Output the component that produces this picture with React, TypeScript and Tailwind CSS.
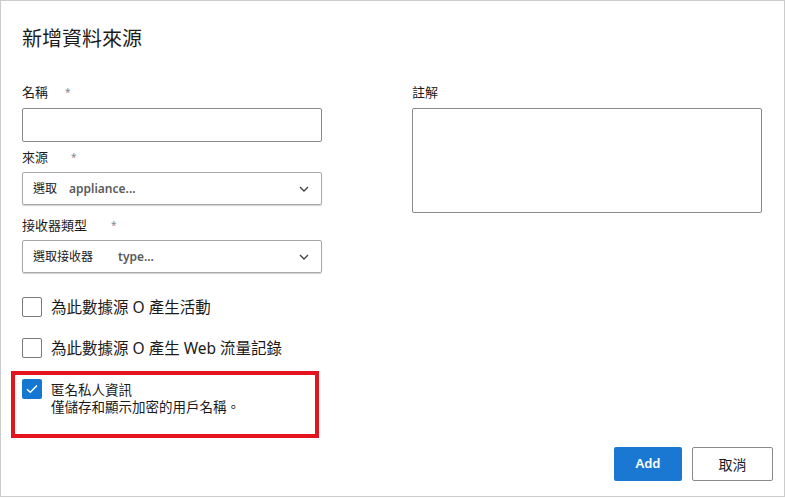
import React from "react";

const font = { fontFamily: '"Noto Sans", "Noto Sans CJK TC", sans-serif' };

function Chevron() {
  return (
    <svg width="10" height="6" viewBox="0 0 10 6" className="shrink-0">
      <path d="M1 1 L5 5 L9 1" fill="none" stroke="#444" strokeWidth="1.4" />
    </svg>
  );
}

function Label({ text, starGap }: { text: string; starGap: string }) {
  return (
    <div className="flex items-center h-[18px] text-[13px] text-[#1b1b1b] leading-[18px]">
      <span>{text}</span>
      <span className={`${starGap} text-[10px] text-[#888]`}>*</span>
    </div>
  );
}

function Select({ a, b, gap }: { a: string; b: string; gap: string }) {
  return (
    <div className="h-[33px] w-[300px] border border-[#a8a8a8] rounded-[2px] shadow-[0_1px_1px_rgba(0,0,0,0.18)] flex items-center pl-[10px] pr-[12px]">
      <span className="text-[12px] text-[#1b1b1b]">{a}</span>
      <span className={`${gap} text-[12px] font-semibold text-[#5a5a5a]`}>{b}</span>
      <div className="flex-1" />
      <Chevron />
    </div>
  );
}

function Box({ checked }: { checked?: boolean }) {
  if (checked)
    return (
      <div className="w-[20px] h-[20px] rounded-[2px] bg-[#1677d2] flex items-center justify-center shrink-0">
        <svg width="12" height="10" viewBox="0 0 12 10">
          <path d="M1 5.2 L4.3 8.3 L11 1.5" fill="none" stroke="white" strokeWidth="1.5" />
        </svg>
      </div>
    );
  return <div className="w-[20px] h-[20px] rounded-[2px] border border-[#7a7a7a] bg-white shrink-0" />;
}

export default function App() {
  return (
    <div
      style={font}
      className="relative w-[785px] h-[497px] border border-[#cccccc] bg-white flex flex-col text-[#1b1b1b]"
    >
      <div className="pl-[21px] pt-[24px] text-[20px] leading-[28px]">新增資料來源</div>
      <div className="flex pl-[21px] mt-[30px] gap-[90px]">
        <div className="w-[300px] flex flex-col">
          <Label text="名稱" starGap="ml-[17px]" />
          <div className="mt-[7px] h-[34px] w-[300px] border border-[#8a8a8a] rounded-[2px]" />
          <div className="mt-[6px]">
            <Label text="來源" starGap="ml-[23px]" />
          </div>
          <div className="mt-[6px]">
            <Select a="選取" b="appliance..." gap="ml-[12px]" />
          </div>
          <div className="mt-[11px]">
            <Label text="接收器類型" starGap="ml-[24px]" />
          </div>
          <div className="mt-[6px]">
            <Select a="選取接收器" b="type..." gap="ml-[25px]" />
          </div>
        </div>
        <div className="w-[350px] flex flex-col">
          <div className="h-[18px] text-[13px] leading-[18px]">註解</div>
          <div className="mt-[7px] h-[105px] w-[350px] border border-[#8a8a8a] rounded-[2px]" />
        </div>
      </div>
      <div className="pl-[21px] mt-[24px] flex flex-col gap-[21px]">
        <div className="flex items-center gap-[9px] h-[20px]">
          <Box />
          <span className="text-[15.5px] leading-[20px]">為此數據源 O 產生活動</span>
        </div>
        <div className="flex items-center gap-[9px] h-[20px]">
          <Box />
          <span className="text-[15.5px] leading-[20px]">為此數據源 O 產生 Web 流量記錄</span>
        </div>
        <div className="flex items-start gap-[9px]">
          <Box checked />
          <div className="text-[13.5px] leading-[17px] mt-[3px]">
            <div>匿名私人資訊</div>
            <div>僅儲存和顯示加密的用戶名稱。</div>
          </div>
        </div>
      </div>
      <div className="mt-auto flex justify-end gap-[10px] pr-[11px] pb-[15px]">
        <button className="w-[68px] h-[34px] rounded-[2px] bg-[#1b78d2] text-white text-[13px] font-semibold">
          Add
        </button>
        <button className="w-[81px] h-[34px] rounded-[2px] border border-[#8a8a8a] bg-white text-[14px] text-[#1b1b1b]">
          取消
        </button>
      </div>
      <div className="absolute left-[10px] top-[370px] w-[308px] h-[67px] border-[4px] border-[#e4141e] pointer-events-none" />
    </div>
  );
}
